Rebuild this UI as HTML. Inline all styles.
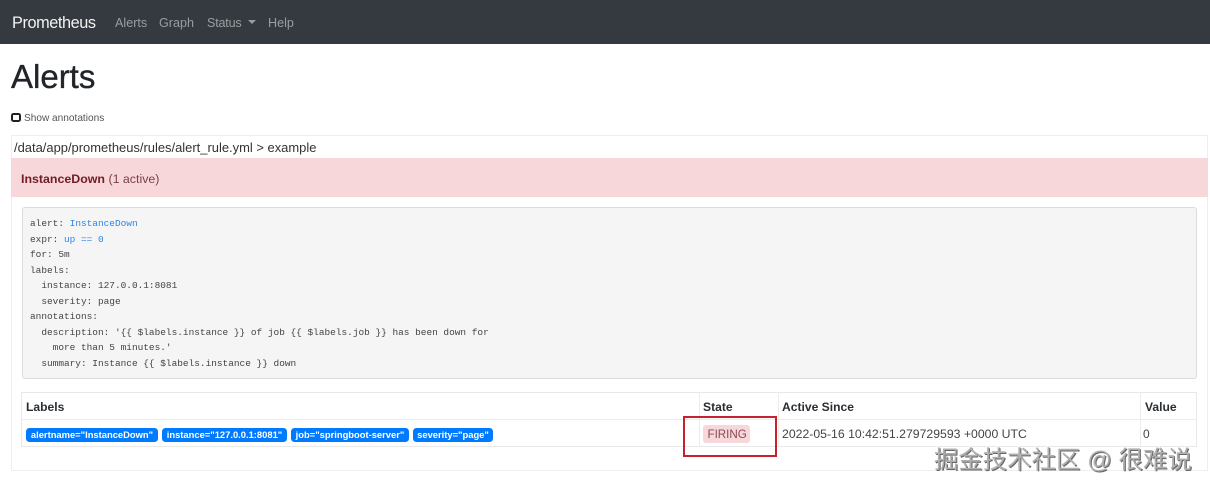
<!DOCTYPE html>
<html lang="en"><head><meta charset="utf-8"><title>Alerts</title>
<style>
html,body{margin:0;padding:0;background:#fff}
body{position:relative;width:1210px;height:492px;overflow:hidden;font-family:"Liberation Sans",sans-serif;color:#212529}
.a{position:absolute;white-space:pre;line-height:1}
.box{position:absolute;box-sizing:border-box}
.n{color:#9a9da0;top:16.5px;font-size:12.6px}
.b{background:#007bff;color:#fff;font-weight:700;font-size:9.4px;height:14.5px;line-height:14.5px;top:427.8px;border-radius:3.5px;text-align:center;position:absolute;white-space:pre}
.l{position:absolute;left:30px;font:9.45px/1 "Liberation Mono",monospace;color:#444;white-space:pre}
.th{font-weight:700;font-size:12.1px;top:401px;color:#2a2e32}
.k{color:#2f86e8}
</style></head><body>
<div class="box" style="left:0;top:0;width:1210px;height:43.5px;background:#343a40"></div>
<div class="a" style="left:12px;top:15px;font-size:16.3px;letter-spacing:-.42px;color:#f2f2f2">Prometheus</div>
<div class="a n" style="left:115px">Alerts</div>
<div class="a n" style="left:159px">Graph</div>
<div class="a n" style="left:207px;letter-spacing:-.2px">Status</div>
<div class="box" style="left:247.5px;top:20px;width:0;height:0;border:4px solid transparent;border-top:4px solid #9a9da0;border-bottom:0"></div>
<div class="a n" style="left:268px">Help</div>

<div class="a" style="left:11px;top:59.5px;font-size:33px;color:#212529;-webkit-text-stroke:.35px #212529">Alerts</div>

<div class="box" style="left:11px;top:112.5px;width:9.5px;height:9.5px;border:2px solid #222;border-radius:2.5px;background:#fff"></div>
<div class="a" style="left:24px;top:113.5px;font-size:10.1px;color:#555">Show annotations</div>

<div class="box" style="left:11px;top:135px;width:1197px;height:336px;border:1px solid #eee"></div>
<div class="a" style="left:14px;top:141.5px;font-size:12.95px;color:#333">/data/app/prometheus/rules/alert_rule.yml &gt; example</div>
<div class="box" style="left:11px;top:158px;width:1197px;height:39px;background:#f8d7da"></div>
<div class="a" style="left:21px;top:172.5px;font-size:12.4px;color:#721c24"><b>InstanceDown</b> <span style="color:#7b3f46">(1 active)</span></div>

<div class="box" style="left:21.5px;top:207px;width:1175.5px;height:172px;background:#f5f5f5;border:1px solid #dcdcdc;border-radius:3px"></div>
<div class="l" style="top:218.5px">alert: <span class="k">InstanceDown</span></div>
<div class="l" style="top:234.5px">expr: <span class="k">up == 0</span></div>
<div class="l" style="top:249.5px">for: 5m</div>
<div class="l" style="top:265.5px">labels:</div>
<div class="l" style="top:280.5px">  instance: 127.0.0.1:8081</div>
<div class="l" style="top:296.5px">  severity: page</div>
<div class="l" style="top:311.5px">annotations:</div>
<div class="l" style="top:327.5px">  description: '{{ $labels.instance }} of job {{ $labels.job }} has been down for</div>
<div class="l" style="top:342.5px">    more than 5 minutes.'</div>
<div class="l" style="top:358.5px">  summary: Instance {{ $labels.instance }} down</div>

<div class="box" style="left:21px;top:392px;width:1176px;height:55px;border:1px solid #e8e8e8"></div>
<div class="box" style="left:21px;top:419px;width:1176px;height:1px;background:#ececec"></div>
<div class="box" style="left:699px;top:392px;width:1px;height:55px;background:#ececec"></div>
<div class="box" style="left:778px;top:392px;width:1px;height:55px;background:#ececec"></div>
<div class="box" style="left:1140px;top:392px;width:1px;height:55px;background:#ececec"></div>
<div class="a th" style="left:26px">Labels</div>
<div class="a th" style="left:703px">State</div>
<div class="a th" style="left:782px">Active Since</div>
<div class="a th" style="left:1145px">Value</div>

<div class="b" style="left:26px;width:132px">alertname="InstanceDown"</div>
<div class="b" style="left:162px;width:125px">instance="127.0.0.1:8081"</div>
<div class="b" style="left:291px;width:118px">job="springboot-server"</div>
<div class="b" style="left:413px;width:80px">severity="page"</div>

<div class="box" style="left:703px;top:425px;width:47px;height:18px;background:#f8d7da;border-radius:3px"></div>
<div class="a" style="left:707.5px;top:428.5px;font-size:11.6px;color:#8a4a50">FIRING</div>
<div class="a" style="left:782px;top:428px;font-size:12.25px;color:#444">2022-05-16 10:42:51.279729593 +0000 UTC</div>
<div class="a" style="left:1143px;top:428px;font-size:12px;color:#444">0</div>

<div class="box" style="left:682.5px;top:415.5px;width:94.5px;height:41.5px;border:2px solid #c9202f"></div>

<div class="a" style="left:934px;top:449px;font-family:'Liberation Sans','Noto Sans CJK SC',sans-serif;font-size:24.4px;color:#b0b0b0;text-shadow:1px 1px 0 #666,-1px -1px 0 #fff">掘金技术社区 @ 很难说</div>
</body></html>
